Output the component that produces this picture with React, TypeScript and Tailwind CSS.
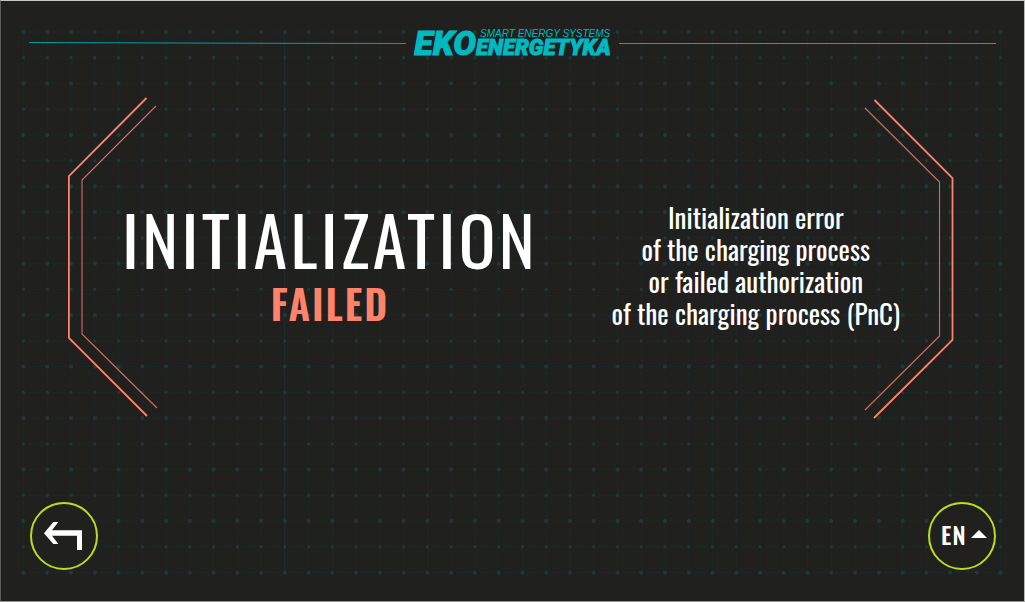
import React from "react";

const COLUMNS = [
  ...Array.from({ length: 40 }, (_, i) => 23.5 + i * 23.76),
  976.8,
  1000.5,
];
const ROWS = Array.from({ length: 22 }, (_, i) => 32 + i * 25.74);

function DotGrid() {
  return (
    <svg
      aria-hidden="true"
      className="pointer-events-none absolute -inset-px h-[calc(100%+2px)] w-[calc(100%+2px)]"
      viewBox="0 0 1025 602"
      preserveAspectRatio="none"
    >
      {ROWS.map((y) =>
        COLUMNS.slice(0, -1).map((x, i) => (
          <line key={`${x}-${y}`} x1={x + 4} x2={COLUMNS[i + 1] - 4} y1={y} y2={y} stroke="#1e2828" />
        )),
      )}
      {COLUMNS.map((x) =>
        ROWS.slice(0, -1).map((y, i) => (
          <line key={`${x}-${y}`} x1={x} x2={x} y1={y + 4} y2={ROWS[i + 1] - 4} stroke="#1e2728" />
        )),
      )}
      <line x1="284.5" x2="284.5" y1="32" y2="572" stroke="#1c2c2e" />
      {ROWS.map((y, row) =>
        COLUMNS.map((x) => (
          <circle
            key={`${x}-${y}`}
            cx={x}
            cy={y}
            r={(row <= 6) === (row % 2 === 0) ? 2.1 : 1.7}
            fill="#1c3a3b"
          />
        )),
      )}
    </svg>
  );
}

function Rule({ slanted = false }: { slanted?: boolean }) {
  return (
    <svg aria-hidden="true" className="h-[4px] min-w-0 flex-1" viewBox="0 0 376 4" preserveAspectRatio="none">
      <line x1="0" x2="376" y1={slanted ? 1.6 : 2.5} y2="2.5" stroke={slanted ? "#009fa3" : "#14a5b2"} />
    </svg>
  );
}

function Logo() {
  return (
    <div className="flex h-7 items-end font-['Roboto','Liberation_Sans',sans-serif] text-[#00b9c1]">
      <span className="text-[34px] leading-7 font-black italic [-webkit-text-stroke:1px_#00b9c1]">EKO</span>
      <span className="flex flex-col">
        <span className="pl-1 font-['Liberation_Sans',sans-serif] text-[10px] leading-[10px] whitespace-nowrap italic">
          SMART ENERGY SYSTEMS
        </span>
        <span className="text-[22px] leading-[18px] font-black italic [-webkit-text-stroke:1px_#00b9c1]">
          ENERGETYKA
        </span>
      </span>
    </div>
  );
}

function Bracket({ outer, inner }: { outer: string; inner: string }) {
  return (
    <svg aria-hidden="true" width="90" height="322" viewBox="0 0 90 322" fill="none" stroke="#ff826b">
      <polyline points={outer} strokeWidth="1.8" />
      <polyline points={inner} strokeWidth="1.1" strokeOpacity="0.8" />
    </svg>
  );
}

export default function App() {
  return (
    <div className="relative flex min-h-screen flex-col border border-t-[#c3c8c4] border-r-[#b5bbb5] border-b-[#8d918d] border-l-[#5b5d5b] bg-[#20201e] font-['Oswald','Liberation_Sans_Narrow','Liberation_Sans',sans-serif] text-white">
      <DotGrid />

      <header className="relative flex items-center gap-2 px-7 pt-7">
        <Rule slanted />
        <Logo />
        <Rule />
      </header>

      <main className="relative mr-[70px] ml-[67px] mt-10 grid">
        <div className="col-start-1 row-start-1 flex justify-between">
          <Bracket outer="78.5,1 0.9,79 0.9,241 79,319" inner="88,9 14,83 14,237 89,311" />
          <Bracket outer="10.5,3 88.5,81 88.5,243 10,321" inner="1,11 75.5,85 75.5,239 1,313" />
        </div>
        <div className="col-start-1 row-start-1 flex items-start justify-between px-[54px] pt-[104px] text-center">
          <h1 className="pt-[2px]">
            <span className="block text-[68px] leading-[72px] tracking-wider">INITIALIZATION</span>
            <span className="block text-[40px] leading-[56px] font-semibold tracking-wider text-[#ff826b]">FAILED</span>
          </h1>
          <p className="text-[27px] leading-8">
            Initialization error
            <br />
            of the charging process
            <br />
            or failed authorization
            <br />
            of the charging process (PnC)
          </p>
        </div>
      </main>

      <footer className="relative mt-auto flex justify-between pr-7 pb-[31px] pl-[29px]">
        <button
          type="button"
          aria-label="Back"
          className="size-[68px] rounded-full border-2 border-[#bbdb1f] bg-[#20201e]"
        >
          <svg aria-hidden="true" className="size-full" viewBox="6 6 192 192" fill="#fff">
            <polygon points="42,94 70,60 85,60 66,85 156,85 156,144 141,144 141,101 66,101 85,126 70,126" />
          </svg>
        </button>
        <button
          type="button"
          className="flex size-[68px] items-center justify-center gap-1 rounded-full border-2 border-[#bbdb1f] bg-[#20201e] pb-1 pl-1 text-[24px] leading-8 font-medium tracking-wider"
        >
          EN
          <svg aria-hidden="true" width="16" height="8" viewBox="0 0 16 8" fill="#fff">
            <polygon points="8,0 16,8 0,8" />
          </svg>
        </button>
      </footer>
    </div>
  );
}
